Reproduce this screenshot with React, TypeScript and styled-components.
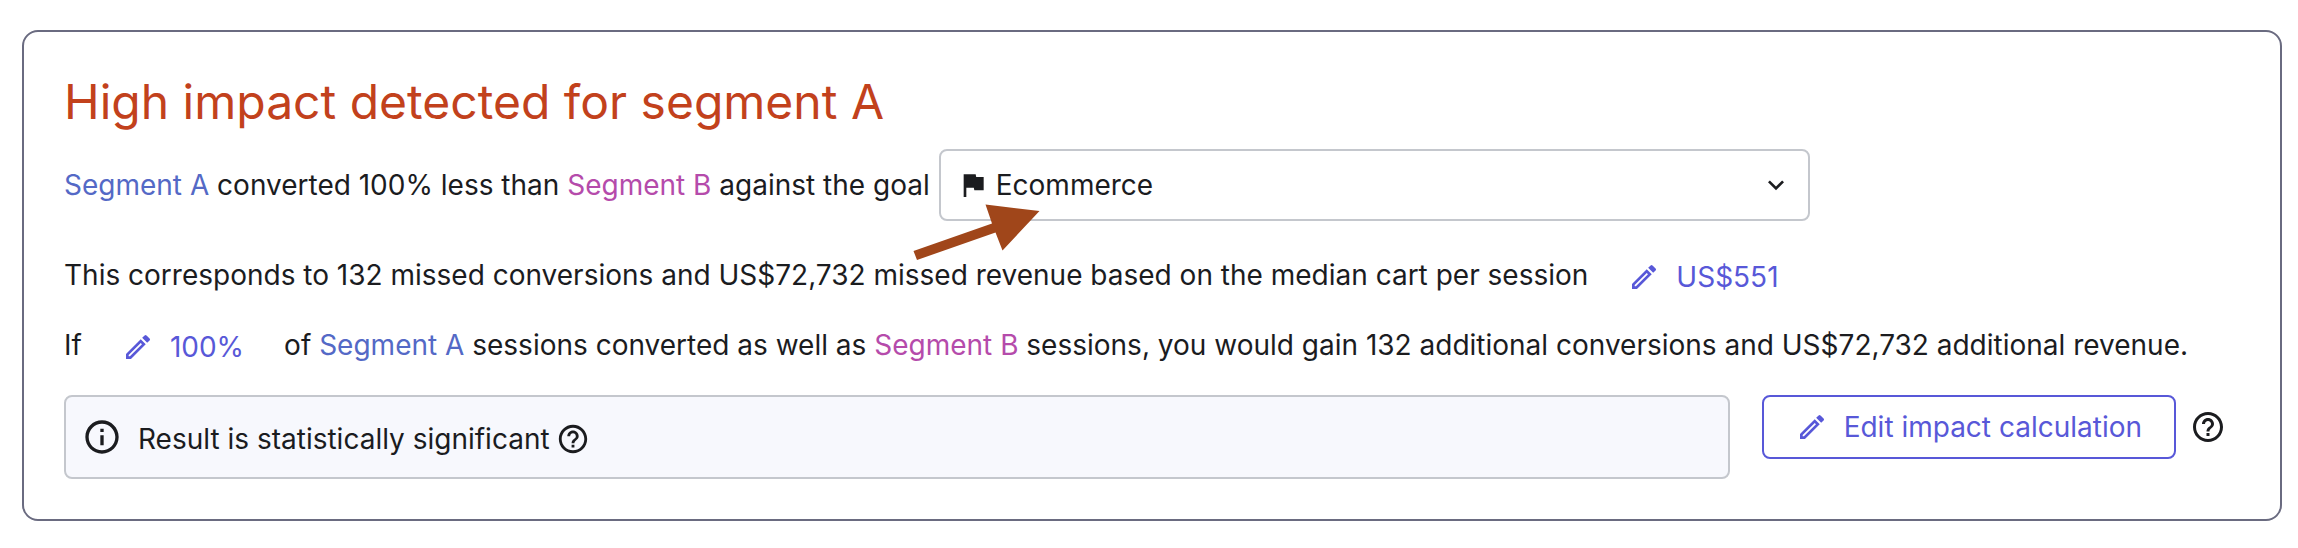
import React from "react";
import styled, { createGlobalStyle, css } from "styled-components";
import {
  MdExpandMore,
  MdFlag,
  MdHelpOutline,
  MdInfoOutline,
  MdOutlineModeEdit,
} from "react-icons/md";

const GlobalStyle = createGlobalStyle`
  *, *::before, *::after { box-sizing: border-box; }
  body {
    margin: 0;
    background: #ffffff;
    color: #1b1c1f;
    font-family: Inter, "Liberation Sans", sans-serif;
    font-size: 28px;
    line-height: 40px;
  }
  svg { display: block; flex: none; }
`;

const Page = styled.main`
  padding: 30px 16px 27px 22px;
`;

const Card = styled.section`
  padding: 40px;
  border: 2px solid #6a6b80;
  border-radius: 16px;
  background: #ffffff;
`;

const Title = styled.h1`
  margin: 0 0 17px;
  color: #c2411c;
  font-size: 48px;
  font-weight: 400;
  line-height: 60px;
`;

const GoalRow = styled.div`
  display: flex;
  align-items: center;
  gap: 9px;
  margin-bottom: 24px;
`;

const GoalLabel = styled.label`
  flex: none;
`;

const SelectBox = styled.div`
  position: relative;
  flex: 0 1 871px;
`;

const GoalSelect = styled.select`
  display: block;
  width: 100%;
  height: 72px;
  padding: 0 64px 0 55px;
  border: 2px solid #c4c7cd;
  border-radius: 8px;
  background: #ffffff;
  color: inherit;
  font: inherit;
  appearance: none;
`;

const SelectIcon = styled.span<{ $side: "left" | "right" }>`
  position: absolute;
  top: 20px;
  ${({ $side }) => ($side === "left" ? "left: 18px;" : "right: 18px;")}
  pointer-events: none;
`;

const Pointer = styled.svg`
  position: absolute;
  top: 54px;
  left: -26px;
  z-index: 1;
  pointer-events: none;
`;

const Sentence = styled.div`
  display: flex;
  align-items: center;
  gap: 8px;
  margin-bottom: 6px;
`;

const Copy = styled.span`
  padding-bottom: 4px;
  white-space: nowrap;
`;

const Segment = styled.span<{ $name: "a" | "b" }>`
  color: ${({ $name }) => ($name === "a" ? "#5469c6" : "#b54bab")};
`;

const ActionButton = styled.button<{ $outlined?: boolean }>`
  display: flex;
  flex: none;
  align-items: center;
  gap: 16px;
  height: 64px;
  padding: 0 32px;
  border: 0;
  border-radius: 8px;
  background: transparent;
  color: #5858d8;
  font: inherit;
  white-space: nowrap;
  cursor: pointer;
  ${({ $outlined }) =>
    $outlined &&
    css`
      border: 2px solid #5858d8;
    `}
`;

const Footer = styled.div`
  display: flex;
  align-items: flex-start;
  margin-top: 16px;
`;

const Notice = styled.div`
  display: flex;
  flex: 1;
  align-items: center;
  gap: 16px;
  min-width: 0;
  height: 84px;
  margin-right: 32px;
  padding: 0 16px;
  border: 2px solid #c4c7cd;
  border-radius: 8px;
  background: #f7f8fd;
`;

const NoticeText = styled.span`
  display: flex;
  align-items: center;
  gap: 6px;
  padding-top: 4px;
`;

const HelpButton = styled.button<{ $standalone?: boolean }>`
  padding: 0;
  border: 0;
  background: transparent;
  color: inherit;
  cursor: pointer;
  ${({ $standalone }) => $standalone && "margin: 14px;"}
`;

export default function App() {
  return (
    <>
      <GlobalStyle />
      <Page>
        <Card>
          <Title>High impact detected for segment A</Title>
          <GoalRow>
            <GoalLabel htmlFor="goal">
              <Segment $name="a">Segment A</Segment> converted 100% less than{" "}
              <Segment $name="b">Segment B</Segment> against the goal
            </GoalLabel>
            <SelectBox>
              <GoalSelect id="goal" defaultValue="ecommerce">
                <option value="ecommerce">Ecommerce</option>
              </GoalSelect>
              <SelectIcon $side="left">
                <MdFlag size={32} />
              </SelectIcon>
              <SelectIcon $side="right">
                <MdExpandMore size={32} />
              </SelectIcon>
              <Pointer width="130" height="60" viewBox="0 0 130 60" aria-hidden="true">
                <path
                  d="M0.5 48L79 20.5L72.500 1.500L126.500 8L89.500 47.500L82.500 29.500L4 57Z"
                  fill="#a0461a"
                />
              </Pointer>
            </SelectBox>
          </GoalRow>
          <Sentence>
            <Copy>
              This corresponds to 132 missed conversions and US$72,732 missed revenue based on
              the median cart per session
            </Copy>
            <ActionButton type="button">
              <MdOutlineModeEdit size={32} />
              US$551
            </ActionButton>
          </Sentence>
          <Sentence>
            <Copy>If</Copy>
            <ActionButton type="button">
              <MdOutlineModeEdit size={32} />
              100%
            </ActionButton>
            <Copy>
              of <Segment $name="a">Segment A</Segment> sessions converted as well as{" "}
              <Segment $name="b">Segment B</Segment> sessions, you would gain 132 additional
              conversions and US$72,732 additional revenue.
            </Copy>
          </Sentence>
          <Footer>
            <Notice role="status">
              <MdInfoOutline size={40} />
              <NoticeText>
                Result is statistically significant
                <HelpButton type="button" aria-label="About significance">
                  <MdHelpOutline size={34} />
                </HelpButton>
              </NoticeText>
            </Notice>
            <ActionButton type="button" $outlined>
              <MdOutlineModeEdit size={32} />
              Edit impact calculation
            </ActionButton>
            <HelpButton type="button" aria-label="About impact calculation" $standalone>
              <MdHelpOutline size={36} />
            </HelpButton>
          </Footer>
        </Card>
      </Page>
    </>
  );
}
